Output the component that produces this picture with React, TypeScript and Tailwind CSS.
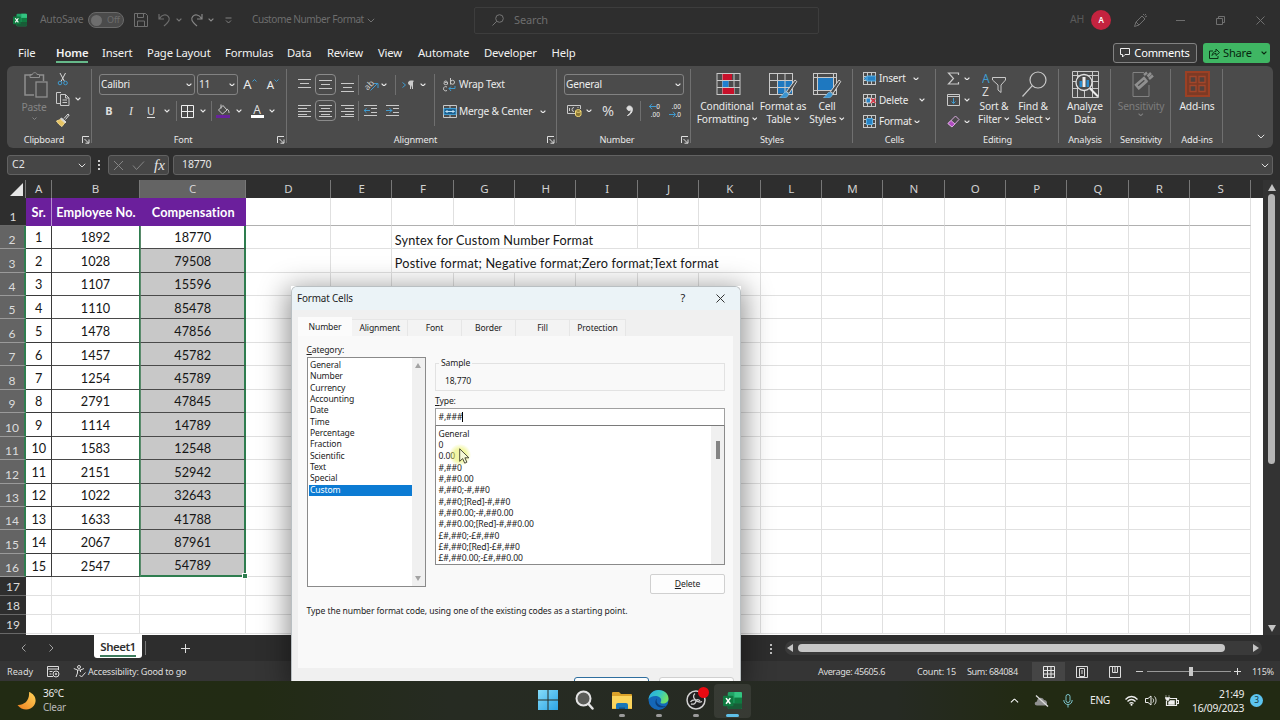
import type { ReactNode } from 'react';

interface ChildProps {
  className?: string;
  children?: ReactNode;
}

const DATA = [
  [1, 1892, 18770], [2, 1028, 79508], [3, 1107, 15596], [4, 1110, 85478], [5, 1478, 47856],
  [6, 1457, 45782], [7, 1254, 45789], [8, 2791, 47845], [9, 1114, 14789], [10, 1583, 12548],
  [11, 2151, 52942], [12, 1022, 32643], [13, 1633, 41788], [14, 2067, 87961], [15, 2547, 54789],
];

const COLUMNS = [
  { name: 'A', w: 'w-[25.500px]' }, { name: 'B', w: 'w-[88px]' }, { name: 'C', w: 'w-[106.500px]' }, { name: 'D', w: 'w-[85px]' },
  ...'EFGHIJKLMNOPQRS'.split('').map(name => ({ name, w: 'w-[61.360px]' })),
];

const NOTES: Record<number, { text: string; span: string; cls: string }> = {
  2: { text: 'Syntex for Custom Number Format', span: 'FGH', cls: 'tracking-[0.13px]' },
  3: { text: 'Postive format; Negative format;Zero format;Text format', span: 'FGHIJ', cls: 'tracking-[0.18px]' },
};

const MENU = [
  { name: 'File', cls: 'ml-[18px] w-[38px]' },
  { name: 'Home', cls: 'w-[46px] font-semibold' },
  { name: 'Insert', cls: 'w-[45px]' },
  { name: 'Page Layout', cls: 'w-[78px]' },
  { name: 'Formulas', cls: 'w-[62px]' },
  { name: 'Data', cls: 'w-[40px]' },
  { name: 'Review', cls: 'w-[51px]' },
  { name: 'View', cls: 'w-[40px]' },
  { name: 'Automate', cls: 'w-[66px]' },
  { name: 'Developer', cls: 'w-[67.500px]' },
  { name: 'Help', cls: 'w-[40px]' },
];

const CATEGORIES = ['General', 'Number', 'Currency', 'Accounting', 'Date', 'Time', 'Percentage', 'Fraction', 'Scientific', 'Text', 'Special', 'Custom'];

const FORMATS = [
  'General', '0', '0.00', '#,##0', '#,##0.00', '#,##0;-#,##0', '#,##0;[Red]-#,##0', '#,##0.00;-#,##0.00',
  '#,##0.00;[Red]-#,##0.00', '£#,##0;-£#,##0', '£#,##0;[Red]-£#,##0', '£#,##0.00;-£#,##0.00',
];

const DIALOG_TABS = [
  { name: 'Alignment', w: 'w-[55.500px]' }, { name: 'Font', w: 'w-[54px]' }, { name: 'Border', w: 'w-[54px]' },
  { name: 'Fill', w: 'w-[54px]' }, { name: 'Protection', w: 'w-[56px]' },
];

function Cell({ className = '', children }: ChildProps) {
  return <div className={`flex shrink-0 items-center justify-center ${className}`}>{children}</div>;
}

function Chevron({ className = 'text-[#e6e6e6]', size = 6 }: { className?: string; size?: number }) {
  return (
    <svg className={`inline-block shrink-0 ${className}`} width={size} height={size * 0.6} viewBox="0 0 10 6" fill="none" stroke="currentColor" strokeWidth={size > 7 ? 1.2 : 2}>
      <path d="M1 1l4 4 4-4" />
    </svg>
  );
}

function Icon({ w, h, className = '', children }: { w: number; h: number; className?: string; children: ReactNode }) {
  return (
    <svg className={`block shrink-0 ${className}`} width={w} height={h} viewBox={`0 0 ${w} ${h}`} fill="none" stroke="#c9c9c9" strokeWidth="1">
      {children}
    </svg>
  );
}

function Sep({ className = 'h-[20px]' }: { className?: string }) {
  return <div className={`w-px shrink-0 bg-[#6f6f6f] ${className}`} />;
}

function Launcher() {
  return (
    <Icon w={8} h={8} className="absolute right-[2px] top-[4px]">
      <path d="M.5 7V.5H7M2.500 3l4 4M7 3.500V7.200H3.500" stroke="#ddd" />
    </Icon>
  );
}

function Group({ label, className, labelClass = '', launcher, children }: ChildProps & { label: string; labelClass?: string; launcher?: boolean }) {
  return (
    <div className={`relative flex h-full shrink-0 flex-col ${className}`}>
      <div className="h-[66px]">{children}</div>
      <div className={`h-[16px] text-center text-[9.200px] leading-[16px] tracking-[-0.15px] text-[#e8e8e8] ${labelClass}`}>{label}</div>
      {launcher && <div className="absolute bottom-0 right-0 h-[16px] w-[10px]"><Launcher /></div>}
      <div className="absolute right-0 top-[3px] h-[74px] w-px bg-[#707070]" />
    </div>
  );
}

function BigButton({ icon, top, bottom, arrow, className }: { icon: ReactNode; top: string; bottom?: string; arrow?: boolean; className: string }) {
  return (
    <div className={`flex shrink-0 flex-col items-center text-[10.200px] leading-[13px] tracking-[-0.14px] whitespace-nowrap ${className}`}>
      <div className="flex h-[33.500px] items-center pt-[3px]">{icon}</div>
      <div>{top}</div>
      <div className="flex items-center gap-[3px]">
        {bottom}
        {arrow && <Chevron size={5.5} className="text-current" />}
      </div>
    </div>
  );
}

function Lines({ ys, kind }: { ys: number[]; kind: 'center' | 'left' | 'right' }) {
  return (
    <Icon w={13} h={14}>
      {ys.map((y, i) => {
        const short = i % 2 === 1;
        const x1 = short ? (kind === 'left' ? 0 : kind === 'right' ? 4 : 2) : 0;
        const x2 = short ? (kind === 'left' ? 9 : kind === 'right' ? 13 : 11) : 13;
        return <path key={y} d={`M${x1} ${y + 0.5}H${x2}`} />;
      })}
    </Icon>
  );
}

function Indent({ flip }: { flip?: boolean }) {
  return (
    <Icon w={13} h={13}>
      <path d="M0 1.500h13M7 4.500h6M7 8.500h6M0 11.500h13" />
      <path d={flip ? 'M0 6.500h6M3.500 4.200l2.300 2.300-2.300 2.300' : 'M0 6.500h6M2.500 4.200L.2 6.500l2.300 2.300'} stroke="#3f9bd0" />
    </Icon>
  );
}

function BrushOverlay() {
  return (
    <>
      <path d="M27 8L18.500 19.500l2.500 2L28.800 9.500z" fill="#4b4b4b" stroke="#d4d4d4" />
      <path d="M18 20c-3 0-3 4-6.500 5.500 4 1.500 8.500.5 9-3.500z" fill="#3a94d0" stroke="#9cc9e6" strokeWidth=".6" />
    </>
  );
}

function GridIcon({ kind }: { kind: 'cond' | 'table' | 'cell' }) {
  if (kind === 'cond') {
    return (
      <Icon w={25} h={22} className="ml-[2px]">
        <rect x="1" y=".5" width="23" height="21" />
        <path d="M1 7.500h23M1 14.500h23M6.500 0v22M12 0v22M18 0v22" />
        <path d="M6.500 1h9.500v6H6.500zM6.500 15h11.500v6H6.500z" fill="#c8102a" stroke="none" />
        <path d="M6.500 8h6v6h-6z" fill="#1f7fd0" stroke="none" />
      </Icon>
    );
  }
  return (
    <Icon w={30} h={26} className="mt-[2px]">
      <rect x="1.500" y="1.500" width="23" height="21" />
      {kind === 'table' ? (
        <>
          <path d="M9 8.500h15v13H9z" fill="#1e78c0" stroke="none" />
          <path d="M1.500 8.500h23M1.500 15.500h23M9.500 1v21M17 1v21" />
        </>
      ) : (
        <>
          <path d="M5 5.500h16v13H5z" fill="#1e78c0" stroke="none" />
          <path d="M1.500 5.500h23M1.500 18.500h23M5.500 1v21M21.500 1v21" />
        </>
      )}
      <BrushOverlay />
    </Icon>
  );
}

function CellsIcon({ kind }: { kind: 'insert' | 'delete' | 'format' }) {
  return (
    <Icon w={13} h={13}>
      <rect x=".5" y=".5" width="12" height="12" />
      <path d="M.5 4.500h12M.5 8.500h12M4.500.5v12M8.500.5v12" />
      {kind === 'insert' && <path d="M4 4h8.500v5H4zM4 4L1 6.500 4 9" fill="#2683c6" stroke="#5fb0e2" />}
      {kind === 'delete' && (
        <>
          <path d="M3 4h4.500v5H3z" fill="#2683c6" stroke="#ddd" />
          <path d="M8 4.500l4.500 4.500M12.500 4.500L8 9" stroke="#e0394a" strokeWidth="1.400" />
        </>
      )}
      {kind === 'format' && <path d="M3.500 3.500h6v6h-6z" fill="#2683c6" stroke="#5fb0e2" />}
    </Icon>
  );
}

function ExcelLogo({ size }: { size: number }) {
  return (
    <svg width={size} height={size} viewBox="0 0 20 20" className="block shrink-0">
      <rect x="5" y="1" width="15" height="18" rx="1.500" fill="#21a366" />
      <path d="M12 1h6.500A1.500 1.500 0 0120 2.500V7h-8z" fill="#33c481" />
      <path d="M12 7h8v6h-8z" fill="#107c41" />
      <path d="M5 13h15v4.500a1.500 1.500 0 01-1.500 1.500h-12A1.500 1.500 0 015 17.500z" fill="#185c37" />
      <rect x="0" y="5" width="11" height="11" rx="1" fill="#0f7a40" />
      <path d="M3.200 7.500l4.500 6M7.700 7.500l-4.500 6" stroke="#fff" strokeWidth="1.600" />
    </svg>
  );
}

function TitleBar() {
  return (
    <div className="flex h-[40px] shrink-0 items-center text-[11px] tracking-[-0.15px] text-[#6d6d6d]">
      <div className="ml-[13px]"><ExcelLogo size={14} /></div>
      <div className="ml-[13px] w-[43px] text-[10.400px] tracking-[-0.3px] whitespace-nowrap">AutoSave</div>
      <div className="ml-[5px] flex h-[16px] w-[36px] items-center rounded-full border border-[#6a6a6a] bg-[#4b4b4b] pl-[2px]">
        <div className="h-[11px] w-[11px] rounded-full bg-[#6e6e6e]" />
        <span className="ml-[5px] text-[9px]">Off</span>
      </div>
      <Icon w={14} h={14} className="ml-[10px]">
        <path d="M.5.5h11l2 2v11H.5zM3.500.5v4h6v-4M3.500 13V8h7v5" stroke="#707070" />
      </Icon>
      <Icon w={13} h={15} className="ml-[10px]">
        <path d="M1 1v5h5M1.500 5.500C4 1.500 8 1 10.200 3.300c2.600 2.700.8 5-4.200 9.700" stroke="#6d6d6d" strokeWidth="1.200" />
      </Icon>
      <Cell className="ml-[4px] w-[8px]"><Chevron className="text-[#777]" size={6} /></Cell>
      <Icon w={13} h={15} className="ml-[7px]">
        <path d="M12 1v5H7M11.500 5.500C9 1.500 5 1 2.800 3.300.2 6 2 8.300 7 13" stroke="#878787" strokeWidth="1.200" />
      </Icon>
      <Cell className="ml-[4px] w-[8px]"><Chevron className="text-[#8a8a8a]" size={6} /></Cell>
      <Icon w={7} h={7} className="ml-[10px]">
        <path d="M.5 1h6M1 3.500L3.500 6 6 3.500" stroke="#808080" />
      </Icon>
      <div className="ml-[20px] w-[112px] text-[10.100px] tracking-[-0.45px] whitespace-nowrap">Custome Number Format</div>
      <Cell className="ml-[3px] w-[8px]"><Chevron className="text-[#777]" size={8} /></Cell>
      <div className="ml-[99px] flex h-[27px] w-[345px] items-center rounded-[2px] border border-[#3d3d3d] pl-[17px]">
        <Icon w={12} h={12}>
          <circle cx="7.500" cy="4.500" r="3.800" stroke="#767676" />
          <path d="M4.700 7.300L.5 11.500" stroke="#767676" />
        </Icon>
        <span className="ml-[10px]">Search</span>
      </div>
      <div className="ml-[251px] w-[14px] text-[10.500px] text-[#5a5a5a]">AH</div>
      <Cell className="ml-[7px] h-[20px] w-[20px] rounded-full bg-[#c4233f] text-[8px] font-semibold text-white">A</Cell>
      <Icon w={14} h={15} className="ml-[23px]">
        <path d="M2 9l6-6 3 3-6 6zM2 9l-1.500 4.500L5 12M9 2l1-1M11 4l2-1M10.500 2.500l1.500-1.500" stroke="#707070" />
      </Icon>
      <div className="ml-[28px] h-px w-[9px] bg-[#6d6d6d]" />
      <Icon w={9} h={9} className="ml-[31px]">
        <path d="M.5 2.500h6v6h-6zM2.500 2V.5h6v6H7" stroke="#707070" />
      </Icon>
      <Icon w={9} h={9} className="ml-[31px]">
        <path d="M.5.5l8 8M8.500.5l-8 8" stroke="#707070" />
      </Icon>
    </div>
  );
}

function MenuBar() {
  return (
    <div className="flex h-[26px] shrink-0 items-center">
      <div className="flex pt-[2px] text-[11.300px] leading-[16px] tracking-[-0.16px] text-[#f2f2f2]">
        {MENU.map((m, i) => (
          <div key={m.name} className={`flex shrink-0 whitespace-nowrap ${m.cls}`}>
            <span className={i === 1 ? 'border-b-2 border-[#66b98a]' : 'pb-[2px]'}>{m.name}</span>
          </div>
        ))}
      </div>
      <div className="ml-auto mr-[10px] flex gap-[6px] text-[11.100px] tracking-[-0.2px]">
        <div className="flex h-[20px] w-[84px] items-center justify-center gap-[4px] rounded-[3px] border border-[#828282] bg-[#3a3a3a] text-white">
          <Icon w={10} h={10}><path d="M.5.5h9v6H5L2.500 9V6.500h-2z" stroke="#eee" /></Icon>
          Comments
        </div>
        <div className="flex h-[20px] w-[67px] items-center rounded-[3px] bg-[#3fb663] pl-[6px] text-[#08260f]">
          <Icon w={11} h={11}><path d="M4 3H.5v7.500H9V8M3 7.500C3.500 4.500 5 3.500 7 3.500V1l3.500 3.500L7 7.500V5.500C5 5.500 4 6 3 7.500z" stroke="#0c3316" /></Icon>
          <span className="ml-[3px]">Share</span>
          <span className="ml-[9px] flex"><Chevron size={6} className="text-[#08260f]" /></span>
        </div>
      </div>
    </div>
  );
}

function Boxed({ children }: ChildProps) {
  return <Cell className="h-[21px] w-[21px] rounded-[4px] border border-[#8b8b8b]">{children}</Cell>;
}

function Combo({ text, className }: { text: string; className: string }) {
  return (
    <div className={`flex h-[21px] shrink-0 items-center justify-between rounded-[3px] border border-[#828282] pl-[1px] pr-[2px] text-[10.100px] tracking-[-0.2px] text-[#eee] ${className}`}>
      {text}
      <Chevron size={6} />
    </div>
  );
}

function Decimals({ up }: { up?: boolean }) {
  const arrow = (
    <svg className="shrink-0" width="7" height="7" viewBox="0 0 7 7" fill="none" stroke="#3f9bd0">
      <path d={up ? 'M0 3.500h7M3 .8L.5 3.500 3 6.200' : 'M0 3.500h6M4 .8l2.500 2.700L4 6.200'} />
    </svg>
  );
  return (
    <div className="flex h-[16px] w-[14px] flex-col text-[6.500px] leading-[8px] font-medium text-[#dedede]">
      <div className="flex h-[8px] items-center justify-end">{up && arrow}{up ? '0' : '.00'}</div>
      <div className="flex h-[8px] items-center justify-end">{!up && arrow}{up ? '.00' : '.0'}</div>
    </div>
  );
}

function Ribbon() {
  return (
    <div className="mx-[7px] flex h-[82px] shrink-0 overflow-hidden rounded-[6px] bg-[#4b4b4b] text-[#ececec]">
      <Group label="Clipboard" launcher className="w-[85px]" labelClass="pr-[11px]">
        <div className="flex">
          <div className="flex w-[54px] flex-col items-center pt-[6px] text-[10.300px] leading-[13px] text-[#858585]">
            <Icon w={24} h={26} className="ml-[3px]">
              <path d="M7.500 3H1v20h9M16 3h3.500v6" stroke="#8f8f8f" strokeWidth="1.500" />
              <path d="M6 5.500V2.500h2.500c0-2.500 4.500-2.500 4.500 0h2.500v3z" stroke="#8f8f8f" />
              <rect x="12" y="10" width="11" height="15" stroke="#8f8f8f" strokeWidth="1.300" />
            </Icon>
            <span className="mt-[3px] tracking-[-0.3px]">Paste</span>
            <Chevron size={5} className="mt-[3px] text-[#858585]" />
          </div>
          <div className="ml-[-5px] flex w-[30px] flex-col pt-[6px]">
            <Icon w={14} h={14}>
              <path d="M4 1l4.500 8.500M9.500 1L5 9.500" stroke="#d8d8d8" />
              <circle cx="4" cy="11" r="1.800" stroke="#3f9bd0" />
              <circle cx="9.500" cy="11" r="1.800" stroke="#3f9bd0" />
            </Icon>
            <div className="mt-[6px] flex items-center">
              <Icon w={14} h={14}>
                <path d="M5 11.500H.5v-11H5M4.500 2.500h5l3.500 3.500v7.500H4.500zM9.500 2.500V6H13M6.500 8h4.500M6.500 10.500h4.500" />
              </Icon>
              <span className="ml-[5px] flex"><Chevron size={6} /></span>
            </div>
            <Icon w={14} h={14} className="mt-[7px]">
              <path d="M8 5.500L12 1l1.200 1L9.500 6.500" stroke="#ddd" />
              <path d="M5.500 5l4.500 4-1 1-4.500-4z" fill="#ddd" stroke="#ddd" />
              <path d="M4.500 6.500L.5 8c1.500 2.500 3 4 5.500 5.500l2.500-3.500z" fill="#e6c363" stroke="#f1d98f" />
            </Icon>
          </div>
        </div>
      </Group>

      <Group label="Font" launcher className="w-[195px]" labelClass="pr-[13px]">
        <div className="flex pl-[7px] pt-[8px]">
          <Combo text="Calibri" className="w-[96px]" />
          <Combo text="11" className="ml-[2px] w-[41px]" />
          <Cell className="w-[24px] text-[13px]">A<span className="mb-[8px] flex rotate-180"><Chevron size={5} className="text-[#3f9bd0]" /></span></Cell>
          <Cell className="w-[22px] text-[11.500px]">A<span className="mb-[8px] flex"><Chevron size={5} className="text-[#3f9bd0]" /></span></Cell>
        </div>
        <div className="flex h-[22px] items-center pl-[6px] pt-[10px] text-[11px] text-[#dedede]">
          <Cell className="w-[22px] font-bold">B</Cell>
          <Cell className="w-[22px] font-['Liberation_Serif',serif] text-[12px] italic">I</Cell>
          <Cell className="w-[18px] underline underline-offset-2">U</Cell>
          <Cell className="w-[14px]"><Chevron /></Cell>
          <Sep className="ml-[2px] mr-[2px] h-[20px]" />
          <Cell className="w-[16px]">
            <Icon w={13} h={13}><path d="M.5.5h12v12H.5zM6.500.5v12M.5 6.500h12" stroke="#eee" /></Icon>
          </Cell>
          <Cell className="w-[16px]"><Chevron /></Cell>
          <Sep />
          <Cell className="w-[22px]">
            <Icon w={14} h={14}>
              <path d="M2.500 6l4.500-4.500L11 6l-4.500 4zM5 .5v4M11 5c2 1 2 3 2 4" stroke="#ccc" />
              <path d="M0 12.500h14" stroke="#68239b" strokeWidth="3" />
            </Icon>
          </Cell>
          <Cell className="w-[10px]"><Chevron /></Cell>
          <Cell className="ml-[3px] w-[20px]">
            <span className="flex w-[13px] justify-center border-b-[3px] border-white text-[12px] leading-[11px]">A</span>
          </Cell>
          <Cell className="w-[10px]"><Chevron /></Cell>
        </div>
      </Group>

      <Group label="Alignment" launcher className="w-[270px]" labelClass="pr-[13px]">
        <div className="flex pl-[10px] pt-[8px]">
          <div className="w-[137px]">
            <div className="flex h-[21px] items-center">
              <Cell className="w-[14px]"><Lines ys={[1, 5, 9]} kind="center" /></Cell>
              <div className="ml-[4px]"><Boxed><Lines ys={[2, 6, 10]} kind="center" /></Boxed></div>
              <Cell className="ml-[4px] w-[14px]"><Lines ys={[5, 9, 13]} kind="center" /></Cell>
              <Sep className="ml-[4px] h-[20px]" />
              <Cell className="ml-[4px] w-[16px]">
                <span className="-rotate-45 text-[8.500px] leading-[8px] text-[#ccc]">ab</span>
                <Icon w={9} h={9} className="-ml-[4px] mt-[4px]"><path d="M.5 8.500l7-7M3.500 1.500h4.500V6" stroke="#3f9bd0" /></Icon>
              </Cell>
              <Cell className="w-[10px]"><Chevron /></Cell>
              <Sep className="ml-[6px] h-[20px]" />
              <Cell className="ml-[5px] w-[14px]">
                <Icon w={12} h={10}>
                  <path d="M.5 2.500l3 2.500-3 2.500" stroke="#3f9bd0" />
                  <path d="M8.500 9V1h3M10.500 1v8M8.500 5a2 2 0 010-4" fill="#ccc" stroke="#ccc" />
                </Icon>
              </Cell>
              <Cell className="ml-[3px] w-[10px]"><Chevron /></Cell>
            </div>
            <div className="mt-[5px] flex h-[21px] items-center">
              <Cell className="w-[14px]"><Lines ys={[1, 4, 7, 10, 12]} kind="left" /></Cell>
              <div className="ml-[4px]"><Boxed><Lines ys={[1, 4, 7, 10, 12]} kind="center" /></Boxed></div>
              <Cell className="ml-[4px] w-[14px]"><Lines ys={[1, 4, 7, 10, 12]} kind="right" /></Cell>
              <Sep className="ml-[4px] h-[20px]" />
              <Cell className="ml-[4px] w-[14px]"><Indent /></Cell>
              <Cell className="ml-[8px] w-[14px]"><Indent flip /></Cell>
            </div>
          </div>
          <Sep className="h-[52px]" />
          <div className="ml-[7px] text-[10.200px] tracking-[-0.2px]">
            <div className="flex h-[21px] items-center">
              <Cell className="w-[15px]">
                <Icon w={13} h={14}>
                  <path d="M1 4.500c0-2 3-2 3.500 0v2M4.500 4.500c-2-.5-3.500 0-3.500 1.200s2.500 1.500 3.500-.2M7.500 0v6.500M7.500 4.500a2 2 0 104-.5 2 2 0 00-4 .5" />
                  <path d="M4 9c-2-1-3.500 0-3.500 1.800S2.500 13.500 4 12.500" />
                  <path d="M12 8v2.500H6M8 8.500L6 10.500l2 2.500" stroke="#3f9bd0" />
                </Icon>
              </Cell>
              <span className="ml-[2px]">Wrap Text</span>
            </div>
            <div className="mt-[6px] flex h-[21px] items-center">
              <Cell className="w-[15px]">
                <Icon w={14} h={13}>
                  <path d="M.5.5h13v12H.5zM7 0v3M7 10v3M0 3.500h14M0 9.500h14" />
                  <path d="M1 3.500h12v6H1z" fill="#1b5f8f" stroke="#3f9bd0" />
                  <path d="M2.500 6.500h9M4.500 5L3 6.500 4.500 8M9.500 5L11 6.500 9.500 8" stroke="#bfe0f3" />
                </Icon>
              </Cell>
              <span className="ml-[2px] w-[81px] whitespace-nowrap">Merge &amp; Center</span>
              <Chevron />
            </div>
          </div>
        </div>
      </Group>

      <Group label="Number" launcher className="w-[134px]" labelClass="pr-[14px]">
        <div className="pl-[7px] pt-[8px]">
          <Combo text="General" className="w-[120px]" />
          <div className="mt-[5px] flex h-[21px] items-center text-[#ddd]">
            <Icon w={15} h={12} className="ml-[3px]">
              <path d="M8 8.500H.5v-8h13V4M2.500 3v3M11 3V2M7 2.500a2 2 0 100 4" />
              <path d="M8.500 6v4c0 2 5.500 2 5.500 0V6c0-1.800-5.500-1.800-5.500 0s5.500 1.800 5.500 0" fill="#8a7532" stroke="#f0d777" />
            </Icon>
            <Cell className="ml-[2px] w-[10px]"><Chevron /></Cell>
            <Cell className="ml-[6px] w-[16px] text-[14.500px]">%</Cell>
            <Cell className="ml-[5px] w-[16px]">
              <Icon w={7} h={12}><path d="M3 1a2.300 2.300 0 102.200 3.500C5 7.500 4 9 1.500 10.500 5 9.500 6.500 7 6.300 4 6.200 2 5 1 3 1z" fill="#ddd" stroke="#ddd" /></Icon>
            </Cell>
            <Sep className="ml-[3px] h-[20px]" />
            <div className="ml-[5px]"><Decimals up /></div>
            <div className="ml-[7px]"><Decimals /></div>
          </div>
        </div>
      </Group>

      <Group label="Styles" className="w-[162px]">
        <div className="flex">
          <BigButton className="ml-[3px] w-[66px]" icon={<GridIcon kind="cond" />} top="Conditional" bottom="Formatting" arrow />
          <BigButton className="w-[46px]" icon={<GridIcon kind="table" />} top="Format as" bottom="Table" arrow />
          <BigButton className="w-[42px]" icon={<GridIcon kind="cell" />} top="Cell" bottom="Styles" arrow />
        </div>
      </Group>

      <Group label="Cells" className="w-[83px]">
        <div className="flex flex-col gap-[6.500px] pl-[10px] pt-[5px] text-[10px] leading-[15px] tracking-[-0.2px]">
          <div className="flex items-center"><CellsIcon kind="insert" /><span className="ml-[3px] w-[34px]">Insert</span><Chevron /></div>
          <div className="flex items-center"><CellsIcon kind="delete" /><span className="ml-[3px] w-[39.500px]">Delete</span><Chevron /></div>
          <div className="flex items-center"><CellsIcon kind="format" /><span className="ml-[3px] w-[34.500px]">Format</span><Chevron /></div>
        </div>
      </Group>

      <Group label="Editing" className="w-[123px]">
        <div className="flex">
          <div className="flex w-[37px] flex-col gap-[6.500px] pl-[11px] pt-[5px]">
            <div className="flex h-[15px] items-center gap-[4px]">
              <Icon w={13} h={13}><path d="M11.500 3V1H1.500l5 5.500-5 5.500h10v-2" strokeWidth="1.200" /></Icon><Chevron />
            </div>
            <div className="flex h-[15px] items-center gap-[4px]">
              <Icon w={13} h={13}>
                <path d="M.5.5h12v11H.5zM.5 2.500h12" />
                <path d="M6.500 4v5.500M4.500 7.500l2 2 2-2" stroke="#3f9bd0" />
              </Icon>
              <Chevron />
            </div>
            <div className="flex h-[15px] items-center gap-[4px]">
              <Icon w={13} h={13}>
                <path d="M1 8.500L8.500 1l3.500 3.500L5 12z" stroke="#d8a9de" />
                <path d="M1 8.500l3-3 4 3.500-3 3z" fill="#b04cc0" stroke="#d8a9de" />
              </Icon>
              <Chevron />
            </div>
          </div>
          <BigButton
            className="ml-[1px] w-[40px]"
            icon={(
              <div className="flex">
                <svg width="25" height="27" viewBox="0 0 25 27" fill="none">
                  <text x="0" y="11.500" fontSize="12" fill="#3f9bd0">A</text>
                  <text x="0" y="24.500" fontSize="12" fill="#dcdcdc">Z</text>
                  <path d="M10.500 6.500h13v2.500L19 14v7.500L16 19v-5l-5.500-5z" stroke="#c9c9c9" />
                </svg>
              </div>
            )}
            top="Sort &"
            bottom="Filter"
            arrow
          />
          <BigButton
            className="w-[38px]"
            icon={<Icon w={26} h={27} className="ml-[3px]"><circle cx="16" cy="9" r="8" strokeWidth="1.200" /><path d="M10.300 14.700L.5 25.500" strokeWidth="1.200" /></Icon>}
            top="Find &"
            bottom="Select"
            arrow
          />
        </div>
      </Group>

      <Group label="Analysis" className="w-[52px]">
        <BigButton
          className="w-[52px]"
          icon={(
            <Icon w={27} h={27}>
              <path d="M.5.5h26v26H.5zM.5 4.500h26M.5 10.500h26M.5 17.500h26M5.500.5v26M12.500 17v10M20.500.5v26" />
              <circle cx="12" cy="11.500" r="8" fill="#4b4b4b" stroke="#e2e2e2" strokeWidth="1.300" />
              <path d="M7.500 10h2.500v6H7.500zM14.500 9H17v7h-2.500z" fill="#2a8bcb" stroke="none" />
              <path d="M10.500 6h3v10h-3z" fill="#eee" stroke="none" />
              <path d="M18 17.500l8 8" stroke="#eee" strokeWidth="2" />
            </Icon>
          )}
          top="Analyze"
          bottom="Data"
        />
      </Group>

      <Group label="Sensitivity" className="w-[60px]">
        <BigButton
          className="w-[60px] text-[#7d7d7d]"
          icon={(
            <Icon w={22} h={27} className="ml-[4px]">
              <path d="M12 1.500H1v24h16V14" stroke="#828282" />
              <path d="M4 14l8-7 2.500 3-8 7zM12 4l3-2.500M15.500 5.500L19 2M17 8l4-3.500M6 18l9-8" stroke="#8f8f8f" strokeWidth="2.500" />
            </Icon>
          )}
          top="Sensitivity"
          arrow
        />
      </Group>

      <Group label="Add-ins" className="w-[52px]">
        <BigButton
          className="w-[52px]"
          icon={(
            <Icon w={25} h={26}>
              <rect x="1" y="1" width="23" height="24" fill="#7c3a25" stroke="#9c4024" strokeWidth="2" />
              <path d="M5 5.500h6v6H5zM14 5.500h6v6h-6zM5 14.500h6v6H5zM14 14.500h6v6h-6z" fill="#50413c" stroke="#a3462a" strokeWidth="1.300" />
            </Icon>
          )}
          top="Add-ins"
        />
      </Group>
      <div className="flex flex-1 items-end justify-end pb-[9px] pr-[8px]"><Chevron size={8} /></div>
    </div>
  );
}

function FormulaBar() {
  return (
    <div className="flex h-[32px] shrink-0 items-center px-[7px] pt-[2px] text-[10.500px] text-[#e6e6e6]">
      <div className="flex h-[20px] w-[84px] items-center justify-between rounded-[3px] border border-[#626262] bg-[#464646] pl-[4px] pr-[4px]">
        C2
        <Chevron size={8} />
      </div>
      <div className="ml-[7px] flex flex-col gap-[2px]">
        <i className="h-[2px] w-[2px] bg-[#ccc]" />
        <i className="h-[2px] w-[2px] bg-[#ccc]" />
        <i className="h-[2px] w-[2px] bg-[#ccc]" />
      </div>
      <div className="ml-[8px] flex h-[20px] w-[61px] items-center rounded-[3px] border border-[#626262] bg-[#464646] pl-[4px]">
        <Icon w={11} h={11}><path d="M1 1l9 9M10 1l-9 9" stroke="#858585" /></Icon>
        <Icon w={13} h={11} className="ml-[8px]"><path d="M1 5.500L4.500 9.500 12 1.500" stroke="#858585" /></Icon>
        <span className="ml-[9px] font-['Liberation_Serif',serif] text-[15px] italic">fx</span>
      </div>
      <div className="ml-[4px] flex h-[20px] flex-1 items-center justify-between rounded-[3px] border border-[#626262] bg-[#464646] pl-[8px] pr-[3px] tracking-[-0.1px]">
        18770
        <Chevron size={8} />
      </div>
    </div>
  );
}

function SheetRow({ n, h }: { n: number; h: string }) {
  const selected = n >= 2 && n <= 16;
  const values = selected ? DATA[n - 2] : n === 1 ? ['Sr.', 'Employee No.', 'Compensation'] : [];
  const note = NOTES[n];
  return (
    <div className={`flex shrink-0 ${h}`}>
      <div className={`flex w-[26px] shrink-0 items-end justify-center border-b text-[12px] leading-[16px] text-[#dcdcdc] ${selected ? 'border-r-2 border-b-[#9a9a9a] border-r-[#2e7d4f] bg-[#646464]' : 'border-b-[#686868] bg-[#2e2e2e]'}`}>
        {n}
      </div>
      {COLUMNS.map((c, i) => {
        let cls = `border-r border-b border-r-[#e0e0e0] ${n === 1 ? 'border-b-[#b0b0b0]' : 'border-b-[#e0e0e0]'}`;
        if (n === 1 && i < 3) cls = `bg-[#6b1f9c] font-bold tracking-[0.1px] text-white ${i === 0 ? 'border-r border-[#b78fd0]' : ''}`;
        if (selected && i === 0) cls = 'border-r border-b border-[#3a3a3a]';
        if (selected && i === 1) cls = 'border-b border-b-[#4a4a4a] border-r border-r-[#2e7d4f]';
        if (selected && i === 2) cls = `${n === 2 ? '' : 'bg-[#c8c8c8]'} border-b ${n === 16 ? 'border-b-2 border-b-[#2e7d4f]' : 'border-b-[#4a4a4a]'} border-l border-l-[#5a8a6b] border-r-2 border-r-[#2e7d4f] relative`;
        if (note && note.span.includes(c.name)) cls = 'border-b border-b-[#e0e0e0]';
        return (
          <div key={c.name} className={`flex shrink-0 items-center whitespace-nowrap ${i < 3 ? 'justify-center pt-[2px] pl-px' : 'pl-[2.500px] pt-[7px]'} ${c.w} ${cls}`}>
            {i < 3 ? values[i] : ''}
            {note && c.name === 'F' ? <span className={note.cls}>{note.text}</span> : ''}
            {n === 16 && i === 2 && <div className="absolute -bottom-[3px] -right-[3px] h-[4px] w-[4px] bg-[#2e7d4f] outline outline-white" />}
          </div>
        );
      })}
    </div>
  );
}

function Sheet() {
  return (
    <div className="flex h-[455px] shrink-0">
      <div className="w-[1263px] overflow-hidden bg-white font-['Lato',sans-serif] text-[12.700px] text-[#161616]">
        <div className="flex h-[18px] bg-[#2e2e2e] font-['Noto_Sans',sans-serif] text-[11.500px] text-[#d2d2d2]">
          <div className="flex w-[26px] shrink-0 items-end justify-end border-r border-[#777] pb-[2px] pr-[2px]">
            <svg width="13" height="13" viewBox="0 0 13 13"><path d="M13 0v13H0z" fill="#e6e6e6" /></svg>
          </div>
          {COLUMNS.map(c => (
            <div key={c.name} className={`flex shrink-0 items-center justify-center border-r border-[#777] pl-px ${c.name === 'C' ? 'bg-[#646464]' : ''} ${c.w}`}>{c.name}</div>
          ))}
        </div>
        <SheetRow n={1} h="h-[27.700px]" />
        {DATA.map(d => <SheetRow key={d[0]} n={Number(d[0]) + 1} h="h-[23.450px]" />)}
        {[17, 18, 19].map(n => <SheetRow key={n} n={n} h="h-[18.750px]" />)}
        <div className="h-[3px] w-[26px] bg-[#2e2e2e]" />
      </div>
      <div className="flex flex-1 flex-col items-center bg-[#333]">
        <svg className="mt-[4px]" width="8" height="7" viewBox="0 0 8 7"><path d="M4 0l4 7H0z" fill="#c4c4c4" /></svg>
        <div className="mt-[3px] h-[270px] w-[7px] rounded-full bg-[#b5b5b5]" />
        <svg className="mt-auto mb-[3px]" width="8" height="7" viewBox="0 0 8 7"><path d="M4 7l4-7H0z" fill="#c4c4c4" /></svg>
      </div>
    </div>
  );
}

function SheetTabs() {
  return (
    <div className="flex h-[26px] shrink-0 bg-[#2d2d2d]">
      <Icon w={5} h={8} className="ml-[21px] mt-[9px]"><path d="M4.500.5L1 4l3.500 3.500" stroke="#a0a0a0" /></Icon>
      <Icon w={5} h={8} className="ml-[23px] mt-[9px]"><path d="M.5.5L4 4 .5 7.500" stroke="#a0a0a0" /></Icon>
      <div className="ml-[40px] flex h-[23px] w-[48px] justify-center rounded-b-[3px] bg-white pt-[3px] text-[11.500px] leading-[17px] font-semibold tracking-[-0.5px] text-[#303030]">
        <span className="h-[19px] border-b-2 border-[#3d7b5d]">Sheet1</span>
      </div>
      <div className="ml-[3px] mt-[6px] h-[14px] w-px bg-[#777]" />
      <Icon w={9} h={9} className="ml-[35px] mt-[9px]"><path d="M4.500 0v9M0 4.500h9" stroke="#ddd" /></Icon>
      <div className="ml-[580px] mt-[9px] flex flex-col gap-[2px]">
        <i className="h-[2px] w-[2px] bg-[#bbb]" />
        <i className="h-[2px] w-[2px] bg-[#bbb]" />
        <i className="h-[2px] w-[2px] bg-[#bbb]" />
      </div>
      <div className="ml-[13px] mt-[6px] flex h-[14px] w-[477px] items-center rounded-full bg-[#3a3a3a] pl-[2px]">
        <svg width="6" height="8" viewBox="0 0 6 8"><path d="M6 0v8L0 4z" fill="#c4c4c4" /></svg>
        <div className="ml-[5px] h-[8px] w-[427px] rounded-[4px] bg-[#c6c6c6]" />
        <svg className="ml-[28px]" width="6" height="8" viewBox="0 0 6 8"><path d="M0 0v8l6-4z" fill="#c4c4c4" /></svg>
      </div>
    </div>
  );
}

function StatusBar() {
  return (
    <div className="flex h-[20px] shrink-0 items-center bg-[#353535] pt-px text-[9.100px] tracking-[-0.22px] whitespace-nowrap text-[#dedede]">
      <div className="ml-[7px] w-[40px] tracking-normal">Ready</div>
      <Icon w={13} h={12}>
        <path d="M6 10.500H.5V.5h11V4M.5 3h11M2.500 5.500h3M2.500 8h2" stroke="#ddd" />
        <circle cx="9" cy="8" r="3" stroke="#ddd" />
        <circle cx="9" cy="8" r=".8" fill="#ddd" />
      </Icon>
      <Icon w={13} h={13} className="ml-[13px]">
        <path d="M4.500 2a1.500 1.500 0 113 0 1.500 1.500 0 01-3 0M.8 3.500l3.700 1.500h3l3.500-1.500M4.500 5v3l-1.500 4M7.500 5v2M6.500 10l2 2 4-4.500" stroke="#ddd" />
      </Icon>
      <div className="ml-[2px] w-[730px]">Accessibility: Good to go</div>
      <div className="w-[99px] tracking-[-0.5px]"><span className="tracking-[-0.4px]">Average: 45605.6</span></div>
      <div className="w-[50px]">Count: 15</div>
      <div className="w-[65px] tracking-[-0.4px]">Sum: 684084</div>
      <Cell className="h-[20px] w-[33px] bg-[#454545]">
        <Icon w={12} h={12}><path d="M.5.5h11v11H.5zM4.500.5v11M8 .5v11M.5 4.500h11M.5 8h11" stroke="#e6e6e6" /></Icon>
      </Cell>
      <Cell className="w-[33px]">
        <Icon w={12} h={12}><path d="M.5.5h11v11H.5zM3.500 2.500h5v8h-5zM5 5h2M5 7h2" stroke="#ddd" /></Icon>
      </Cell>
      <Cell className="w-[34px]">
        <Icon w={12} h={12}><path d="M.5.5h11v11H.5zM3.500 0v6.500h5V0M6 0v6" stroke="#ddd" /></Icon>
      </Cell>
      <div className="ml-[4px] h-px w-[7px] bg-[#ccc]" />
      <div className="ml-[4px] flex h-[10px] w-[84px] items-center justify-center bg-[linear-gradient(#999,#999)] bg-[length:100%_1px] bg-center bg-no-repeat">
        <div className="ml-[4px] h-[9px] w-[4px] bg-[#c8c8c8]" />
      </div>
      <Icon w={7} h={7} className="ml-[3px]"><path d="M3.500 0v7M0 3.500h7" stroke="#ddd" /></Icon>
      <div className="ml-[11px] tracking-[-0.35px]">115%</div>
    </div>
  );
}

function TaskApp({ children, active, open }: ChildProps & { active?: boolean; open?: boolean }) {
  return (
    <div className={`flex h-[34px] w-[36.900px] flex-col items-center rounded-[4px] pt-[6px] ${active ? 'bg-white/[0.08]' : ''}`}>
      <div className="flex h-[21px] items-center">{children}</div>
      {(open || active) && <div className={`mt-[3px] h-[3px] rounded-full ${active ? 'w-[13px] bg-[#5fc0e8]' : 'w-[6px] bg-[#9a9a9a]'}`} />}
    </div>
  );
}

function Taskbar() {
  return (
    <div className="relative z-20 flex h-[39px] shrink-0 items-center bg-[linear-gradient(90deg,#222b13_0%,#222b14_20%,#262b22_35%,#262a23_70%,#222a13_80%,#222a13_100%)] text-[#ececec]">
      <svg className="ml-[17px]" width="20" height="20" viewBox="0 0 20 20">
        <defs>
          <linearGradient id="moon" x1="1" y1="0" x2="0" y2="1">
            <stop offset="0" stopColor="#ffd45a" />
            <stop offset="1" stopColor="#ee7f1e" />
          </linearGradient>
        </defs>
        <path d="M12 1c6 2 8.500 8.500 5 13.500-4 5.500-12 5.500-16.500-.5 6 .5 12.500-4 11.500-13z" fill="url(#moon)" />
      </svg>
      <div className="ml-[6px] w-[484px] text-[10px] leading-[13.500px] tracking-[-0.3px]">
        <div>36°C</div>
        <div className="text-[#b8b8b8]">Clear</div>
      </div>
      <div className="flex pl-[2.500px]">
        <TaskApp>
          <svg width="20" height="20" viewBox="0 0 20 20">
            <defs>
              <linearGradient id="win" x1="0" y1="0" x2="1" y2="1">
                <stop offset="0" stopColor="#86dcf9" />
                <stop offset="1" stopColor="#2ba4e6" />
              </linearGradient>
            </defs>
            <path d="M0 0h9.500v9.500H0zM10.500 0H20v9.500h-9.500zM0 10.500h9.500V20H0zM10.500 10.500H20V20h-9.500z" fill="url(#win)" />
          </svg>
        </TaskApp>
        <TaskApp>
          <svg width="19" height="20" viewBox="0 0 19 20" fill="none"><circle cx="8.500" cy="8.500" r="7" fill="#5b5c58" stroke="#e4e4e4" strokeWidth="2" /><path d="M13.500 14l4 4.500" stroke="#e4e4e4" strokeWidth="2.500" strokeLinecap="round" /></svg>
        </TaskApp>
        <TaskApp open>
          <svg width="20" height="19" viewBox="0 0 20 19"><path d="M0 2a1 1 0 011-1h6l2 2h10a1 1 0 011 1v14H0z" fill="#dba22a" /><path d="M0 5h20v12.500H0z" fill="#fbd45c" /><path d="M4 18v-4q0-2 2-2h8q2 0 2 2v4z" fill="#1a76b8" /><path d="M7 18v-1.500h6V18z" fill="#0f4f86" /></svg>
        </TaskApp>
        <TaskApp open>
          <svg width="21" height="20" viewBox="0 0 21 20">
            <defs>
              <linearGradient id="edge" x1="0" y1="0" x2="1" y2=".4">
                <stop offset="0" stopColor="#2aa8e6" />
                <stop offset=".6" stopColor="#37c8c0" />
                <stop offset="1" stopColor="#6fe06a" />
              </linearGradient>
            </defs>
            <circle cx="10.500" cy="10" r="10" fill="#1467b8" />
            <path d="M.5 9.500C1 4 5 0 10.500 0c6 0 10 4 10 8.500 0 3.500-2.500 5-5.500 5-2 0-3-.8-2.200-1.800C14.500 8.500 11 6 7.500 6 4 6 1.500 7.500.5 9.500z" fill="url(#edge)" />
            <path d="M9 8.500c-3 2.500-2 9 5 9 2.500 0 4.500-1 5.500-2.200-1.500 1-3.500 1.200-5.500.7C9.500 15 7.500 11.500 9 8.500z" fill="#0c3f7c" />
          </svg>
        </TaskApp>
        <TaskApp open>
          <div className="relative">
            <svg width="20" height="20" viewBox="0 0 20 20" fill="none" stroke="#d2d2d2">
              <circle cx="10" cy="10" r="9" fill="#20201f" strokeWidth="1.500" />
              <path d="M9 3.500c-2.500 2-1.500 5.500 1 6.500M16 11.500c-3 1.500-5.500-.5-6-1.500M5 14c3 .8 5.500-1 5-4M10 10c1.500-.5 3-.5 4 1M10 10c-1.500 0-4-.5-5.500 2" strokeWidth="1.300" />
            </svg>
            <div className="absolute -right-[3px] -top-[3px] h-[11px] w-[11px] rounded-full bg-[#ec0a12]" />
          </div>
        </TaskApp>
        <TaskApp active><ExcelLogo size={19} /></TaskApp>
      </div>
      <div className="ml-auto flex items-center text-[10.300px] tracking-[-0.2px]">
        <span className="flex rotate-180"><Chevron size={9} className="text-white" /></span>
        <Icon w={15} h={12} className="ml-[15px]">
          <path d="M3 10.500c-3 0-3-4 0-4C3 2.500 8.500 1.500 10 5c3.500 0 4.500 5.500.5 5.500z" fill="#909090" stroke="none" />
          <path d="M2 .5l12 11" stroke="#ddd" strokeWidth="1.300" />
        </Icon>
        <Icon w={10} h={14} className="ml-[14px]">
          <rect x="3" y=".5" width="4" height="8" rx="2" stroke="#7cc4cc" />
          <path d="M.8 6c0 6 8.400 6 8.400 0M5 10.500v3" stroke="#7cc4cc" />
        </Icon>
        <div className="ml-[17px] w-[20px] tracking-[-0.35px]">ENG</div>
        <Icon w={13} h={11} className="ml-[15px]">
          <path d="M.5 4.500c3.500-4 8.500-4 12 0M2.500 6.500c2.500-2.700 5.500-2.700 8 0M4.500 8.500c1.200-1.300 2.800-1.300 4 0" stroke="#eee" strokeWidth="1.300" />
          <circle cx="6.500" cy="9.800" r="1" fill="#fff" stroke="none" />
        </Icon>
        <Icon w={12} h={11} className="ml-[7px]">
          <path d="M.5 3.500H3L6 1v9L3 7.500H.5zM7.800 3.500c1 1 1 3 0 4M9.500 1.500c2 2 2 6 0 8" stroke="#eee" />
        </Icon>
        <Icon w={14} h={12} className="ml-[8px]">
          <path d="M5 3.500h6.500v7h-10V6M12 5.500h1.500v3H12" stroke="#eee" strokeWidth="1.200" />
          <path d="M5 5.500h4.500v4H3.500V7zM1 0v3M4 0v3M0 2.500h5l-1.500 3h-2z" fill="#eee" stroke="#eee" strokeWidth=".5" />
        </Icon>
        <div className="ml-[11px] w-[54px] text-right leading-[14px] tracking-[-0.28px]">
          <div>21:49</div>
          <div>16/09/2023</div>
        </div>
        <Cell className="ml-[6px] mr-[17px] h-[13px] w-[13px] rounded-full bg-[#5cc4f0] text-[8.500px] text-[#173440]">3</Cell>
      </div>
    </div>
  );
}

function FormatCellsDialog() {
  return (
    <div className="absolute left-[291px] top-[286px] z-10 flex h-[395px] w-[450px] flex-col overflow-hidden rounded-t-[6px] border border-b-0 border-[#b9bfc2] bg-[#f0f0f0] text-[8.600px] tracking-[-0.13px] text-[#1c1c1c]">
      <div className="flex h-[23px] shrink-0 items-center bg-[#ebf3f7] pl-[5px] text-[9.900px] tracking-[-0.15px]">
        Format Cells
        <span className="ml-auto mr-[31px] text-[11px]">?</span>
        <Icon w={9} h={9} className="mr-[15px]"><path d="M.5.5l8 8M8.500.5l-8 8" stroke="#333" /></Icon>
      </div>
      <div className="mx-[6px] flex h-[26px] shrink-0 items-end">
        <div className="flex h-[19px] w-[54px] items-center justify-center bg-[#fbfbfb] pt-px">Number</div>
        {DIALOG_TABS.map(t => (
          <div key={t.name} className={`flex h-[17px] shrink-0 items-center justify-center border-r border-t border-[#e6e6e6] bg-[#f3f3f3] pl-px pt-px ${t.w}`}>{t.name}</div>
        ))}
      </div>
      <div className="ml-[6px] flex h-[332px] w-[435px] shrink-0 flex-col bg-[#f9f9f9] pl-[8.500px] pr-[8px] pt-[7px]">
        <div className="flex">
          <div className="w-[119px]">
            <div className="h-[14px] leading-[14px]"><u>C</u>ategory:</div>
            <div className="flex h-[230px] border border-[#8a8a8a] bg-white">
              <div className="w-[104px] pl-px pt-[2px]">
                {CATEGORIES.map(c => (
                  <div key={c} className={`h-[11.350px] pl-[1.500px] leading-[11px] ${c === 'Custom' ? 'bg-[#0c7bd3] text-white' : ''}`}>{c}</div>
                ))}
              </div>
              <div className="flex flex-1 flex-col items-center justify-between bg-[#f0f0f0] py-[5px]">
                <svg width="6" height="5" viewBox="0 0 6 5"><path d="M3 0l3 5H0z" fill="#a3a3a3" /></svg>
                <svg width="6" height="5" viewBox="0 0 6 5"><path d="M3 5l3-5H0z" fill="#a3a3a3" /></svg>
              </div>
            </div>
          </div>
          <div className="ml-[9.500px] w-[290px] pt-[14px]">
            <fieldset className="h-[34px] border border-[#e2e2e2] pl-[9px]">
              <legend className="-ml-[6px] px-[2px] leading-[13px]">Sample</legend>
              <div className="mt-[5px] leading-[12px]">18,770</div>
            </fieldset>
            <div className="mt-[4px] h-[13px] leading-[13px]"><u>T</u>ype:</div>
            <div className="flex h-[18px] items-center border border-[#a0a0a0] border-b-[#7a7a7a] bg-white pl-[2.500px]">
              #,###<span className="h-[10px] w-px bg-black" />
            </div>
            <div className="flex h-[139px] border border-t-0 border-[#8a8a8a] bg-white">
              <div className="w-[275px] pl-[2.500px] pt-[2.500px]">
                {FORMATS.map(f => <div key={f} className="h-[11.350px] leading-[11px]">{f}</div>)}
              </div>
              <div className="flex flex-1 justify-center bg-[#f0f0f0] pt-[15px]">
                <div className="h-[18px] w-[4px] bg-[#858585]" />
              </div>
            </div>
            <div className="ml-[215px] mt-[9px] flex h-[20px] w-[75px] items-center justify-center rounded-[2px] border border-[#d0d0d0] bg-[#fdfdfd]">
              <u>D</u>elete
            </div>
          </div>
        </div>
        <div className="mt-[11px] tracking-[-0.09px]">Type the number format code, using one of the existing codes as a starting point.</div>
      </div>
      <div className="mt-[9px] flex justify-end gap-[10px] pr-[6px]">
        <div className="h-[20px] w-[75px] rounded-[3px] border border-[#2f6f9f] bg-[#fdfdfd]" />
        <div className="h-[20px] w-[75px] rounded-[3px] border border-[#d0d0d0] bg-[#fdfdfd]" />
      </div>
    </div>
  );
}

function Pointer() {
  return (
    <div className="absolute left-[449px] top-[444px] z-30 flex h-[22px] w-[22px] items-center justify-center rounded-full bg-[radial-gradient(circle,rgba(232,240,90,0.55)_40%,rgba(232,240,90,0)_72%)]">
      <svg className="ml-[8px] mt-[2px]" width="11" height="16" viewBox="0 0 11 16">
        <path d="M.7.8v12.500l3-2.700 2 4.600 2.200-1-2-4.400h4z" fill="#f6f8d8" stroke="#3c3c2c" strokeWidth=".9" />
      </svg>
    </div>
  );
}

export default function App() {
  return (
    <div className="relative flex h-[720px] w-[1280px] flex-col overflow-hidden bg-[#2e2e2e] font-['Noto_Sans',sans-serif]">
      <TitleBar />
      <MenuBar />
      <Ribbon />
      <FormulaBar />
      <div className="relative flex flex-col">
        <Sheet />
        <SheetTabs />
        <StatusBar />
        <div className="pointer-events-none absolute left-[291px] top-[106px] h-[395px] w-[450px] shadow-[0_6px_26px_4px_rgba(0,0,0,0.42)]" />
      </div>
      <Taskbar />
      <FormatCellsDialog />
      <Pointer />
    </div>
  );
}
